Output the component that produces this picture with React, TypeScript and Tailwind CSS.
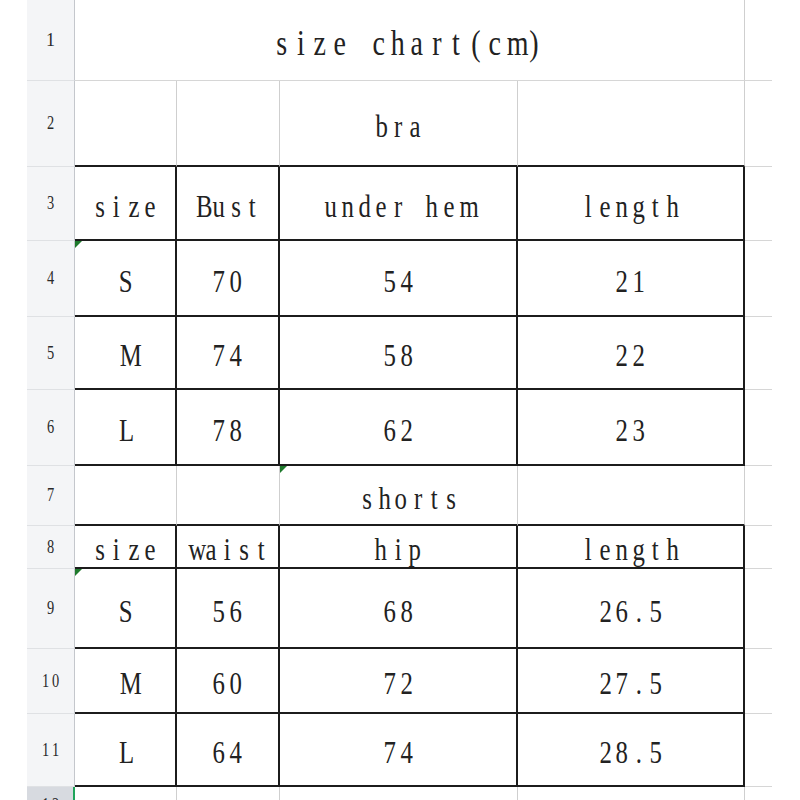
import React from "react";

const BLACK = "border-[#1c1c1c]";

type Cell = {
    text?: string;
    span?: number;
    right: "k" | "g" | "n";
    bottom: "k" | "g" | "n";
    mark?: boolean;
    shift?: string;
};

// fixed-pitch, slightly condensed letters, the way the sheet's font draws latin text
function Mono({ text, cw }: { text: string; cw: string }) {
    return (
        <span className="whitespace-nowrap">
            {text.split("").map((c, i) => (
                <span key={i} className={`inline-block text-center ${cw}`}>
                    <span className="inline-block scale-x-[0.8]">{c === " " ? "\u00a0" : c}</span>
                </span>
            ))}
        </span>
    );
}

function borderCls(c: Cell) {
    const r = c.right === "k" ? `border-r-2 ${BLACK}` : c.right === "g" ? "border-r border-r-[#cfcfcf]" : "";
    const b = c.bottom === "k" ? "border-b-2 border-b-[#1c1c1c]" : c.bottom === "g" ? "border-b border-b-[#d6d6d6]" : "";
    return `${r} ${b}`;
}

const spanCls: Record<number, string> = { 1: "col-span-1", 2: "col-span-2", 3: "col-span-3", 4: "col-span-4" };

function Row({ num, h, cells, last }: { num: string; h: string; cells: Cell[]; last?: boolean }) {
    return (
        <div className={`grid grid-cols-[27px_48px_102px_103px_238px_227px_27px_1fr] ${h}`}>
            <div className="bg-white" />
            <div
                className={`flex justify-center border-r border-r-[#c4c7cc] border-b border-b-[#dfe1e4] text-[18px] text-[#2a2a2a] ${
                    last ? "bg-[#d7dae0] items-start pt-[5px]" : "bg-[#f4f5f7] items-center"
                }`}
            >
                <Mono text={num} cw="w-[10px]" />
            </div>
            {cells.map((c, i) => (
                <div
                    key={i}
                    className={`relative flex items-center justify-center ${spanCls[c.span ?? 1]} ${borderCls(c)} ${
                        last && i === 0 ? "border-l-2 border-l-[#1fa45a] -ml-[2px]" : ""
                    }`}
                >
                    {c.mark && (
                        <span className="absolute left-0 top-0 h-0 w-0 border-t-[7px] border-r-[7px] border-t-[#1e7a2c] border-r-transparent" />
                    )}
                    {c.text && (
                        <span className={`text-[31px] leading-none text-[#222] ${c.shift ?? "pt-[6px]"}`}>
                            <Mono text={c.text} cw="w-[16.8px]" />
                        </span>
                    )}
                </div>
            ))}
            <div className="bg-white" />
        </div>
    );
}

const boxed = (vals: string[], mark = false): Cell[] => [
    ...vals.map((v, i) => ({ text: v, right: "k" as const, bottom: "k" as const, mark: mark && i === 0 })),
    { right: "n", bottom: "g" },
];

export default function App() {
    return (
        <div
            className="h-[800px] w-[800px] overflow-hidden bg-white"
            style={{ fontFamily: '"Liberation Serif", "Noto Sans CJK SC", serif' }}
        >
            <div className="grid grid-cols-[27px_48px_670px_27px_1fr] h-[81px]">
                <div className="bg-white" />
                <div className="flex items-center justify-center bg-[#f4f5f7] border-r border-r-[#c4c7cc] border-b border-b-[#dfe1e4] text-[18px] text-[#2a2a2a]">
                    1
                </div>
                <div className="flex items-center justify-center border-r border-r-[#cfcfcf] border-b border-b-[#d6d6d6]">
                    <span className="text-[35px] leading-none text-[#222] pt-[6px] pr-[4px]">
                        <Mono text="size chart(cm)" cw="w-[19.4px]" />
                    </span>
                </div>
                <div className="border-b border-b-[#d6d6d6]" />
                <div className="bg-white" />
            </div>

            <Row
                num="2"
                h="h-[86px]"
                cells={[
                    { right: "g", bottom: "k" },
                    { right: "g", bottom: "k" },
                    { text: "bra", right: "g", bottom: "k", shift: "pt-[6px]" },
                    { right: "g", bottom: "k" },
                    { right: "n", bottom: "g" },
                ]}
            />
            <Row num="3" h="h-[74px]" cells={boxed(["size", "Bust", "under hem", "length"])} />
            <Row num="4" h="h-[76px]" cells={boxed(["S", "70", "54", "21"], true)} />
            <Row num="5" h="h-[73px]" cells={boxed(["M", "74", "58", "22"])} />
            <Row num="6" h="h-[76px]" cells={boxed(["L", "78", "62", "23"])} />
            <Row
                num="7"
                h="h-[60px]"
                cells={[
                    { right: "g", bottom: "k" },
                    { right: "g", bottom: "k" },
                    { text: "shorts", right: "g", bottom: "k", mark: true, shift: "pt-[6px] pl-[22px]" },
                    { right: "g", bottom: "k" },
                    { right: "n", bottom: "g" },
                ]}
            />
            <Row num="8" h="h-[43px]" cells={boxed(["size", "waist", "hip", "length"])} />
            <Row num="9" h="h-[80px]" cells={boxed(["S", "56", "68", "26.5"], true)} />
            <Row num="10" h="h-[65px]" cells={boxed(["M", "60", "72", "27.5"])} />
            <Row num="11" h="h-[73px]" cells={boxed(["L", "64", "74", "28.5"])} />
            <Row
                num="12"
                h="h-[30px]"
                last
                cells={[
                    { right: "g", bottom: "n" },
                    { right: "g", bottom: "n" },
                    { right: "g", bottom: "n" },
                    { right: "g", bottom: "n" },
                    { right: "n", bottom: "n" },
                ]}
            />
        </div>
    );
}
